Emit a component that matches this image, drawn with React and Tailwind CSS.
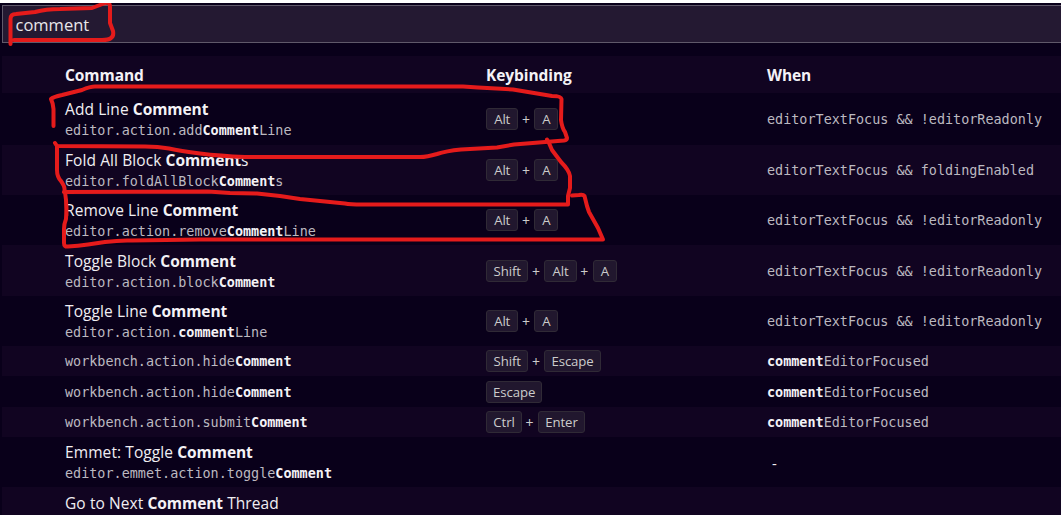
const B = ({ children }) => <b className="font-bold tracking-[-0.07px] text-[#f4f2f6]">{children}</b>;

const MonoB = ({ children }) => <b className="font-bold text-[#f4f2f6]">{children}</b>;

const editable = 'editorTextFocus && !editorReadonly';

const rows = [
  { h: 'h-[52px] pt-px', title: ['Add Line ', 'Comment', ''], id: ['editor.action.add', 'Comment', 'Line'], keys: ['Alt', 'A'], when: ['', '', editable] },
  { h: 'h-[50px]', title: ['Fold All Block ', 'Comment', 's'], id: ['editor.foldAllBlock', 'Comment', 's'], keys: ['Alt', 'A'], when: ['', '', 'editorTextFocus && foldingEnabled'] },
  { h: 'h-[50px]', title: ['Remove Line ', 'Comment', ''], id: ['editor.action.remove', 'Comment', 'Line'], keys: ['Alt', 'A'], when: ['', '', editable] },
  { h: 'h-[51px] pt-px', title: ['Toggle Block ', 'Comment', ''], id: ['editor.action.block', 'Comment', ''], keys: ['Shift', 'Alt', 'A'], when: ['', '', editable] },
  { h: 'h-[50px]', title: ['Toggle Line ', 'Comment', ''], id: ['editor.action.', 'comment', 'Line'], keys: ['Alt', 'A'], when: ['', '', editable] },
  { h: 'h-[30px]', id: ['workbench.action.hide', 'Comment', ''], keys: ['Shift', 'Escape'], when: ['', 'comment', 'EditorFocused'] },
  { h: 'h-[31px] pt-px', id: ['workbench.action.hide', 'Comment', ''], keys: ['Escape'], when: ['', 'comment', 'EditorFocused'] },
  { h: 'h-[30px]', id: ['workbench.action.submit', 'Comment', ''], keys: ['Ctrl', 'Enter'], when: ['', 'comment', 'EditorFocused'] },
  { h: 'h-[50px]', title: ['Emmet: Toggle ', 'Comment', ''], id: ['editor.emmet.action.toggle', 'Comment', ''], keys: [], when: null },
  { h: 'h-[28px] pt-px', title: ['Go to Next ', 'Comment', ' Thread'], keys: [] },
];

const keyWidths = { Alt: 'w-[32.4px]', A: 'w-6', Shift: 'w-[42.4px]', Escape: 'w-[56.3px]', Ctrl: 'w-9', Enter: 'w-[47px]' };

function Marked({ parts, mono }) {
  const Strong = mono ? MonoB : B;
  return (
    <>
      {parts[0]}
      {parts[1] && <Strong>{parts[1]}</Strong>}
      {parts[2]}
    </>
  );
}

function Keys({ keys }) {
  return (
    <div className="flex items-center text-[13.2px] text-[#cccccc]">
      {keys.map((key, i) => (
        <div key={key} className="flex items-center">
          {i > 0 && <span className="w-4 pt-[2px] pr-px text-center text-[14px] leading-5">+</span>}
          <kbd className={`${keyWidths[key]} flex h-[22px] items-center justify-center rounded-[3px] border border-[#302a36] bg-[#21172e] pt-0.5 font-['Open_Sans',sans-serif] tracking-[-0.1px]`}>
            {key}
          </kbd>
        </div>
      ))}
    </div>
  );
}

const mono = "font-['DejaVu_Sans_Mono',monospace] text-[13.44px] leading-5 text-[#bcb9c0]";

function Row({ row, striped }) {
  const { h, title, id, keys, when } = row;
  return (
    <div className={`${h} ${striped ? 'bg-[#110421]' : ''} grid shrink-0 grid-cols-[421px_281px_1fr] pl-[63px] whitespace-pre`}>
      <div className={title ? 'pt-[5px]' : 'pt-[6px]'}>
        {title && (
          <div className="h-[22px] text-[15.5px] leading-[21px] tracking-[0.09px] text-[#f0eef2]">
            <Marked parts={title} />
          </div>
        )}
        {id && <div className={mono}><Marked parts={id} mono /></div>}
      </div>
      <div className={title ? 'pt-[14px]' : 'pt-1'}><Keys keys={keys} /></div>
      <div className={`${mono} ${title ? 'pt-[16px]' : 'pt-[6px]'}`}>
        {when && <Marked parts={when} mono />}
        {when === null && <span className="pl-[5px] font-['Open_Sans',sans-serif] text-[15px] leading-5 text-[#f0eef2]">-</span>}
      </div>
    </div>
  );
}

const strokes = [
  'M10.5 44V19Q10.5 14 16 14L35 12Q46 9 60 9L92 8L104 3.5Q110 1 110 7L110 23L113 31Q114 36 111 38Q109 40 102 40H14',
  'M53.5 126V109Q53 103 51 99Q53 97 62 95L82 90Q90 86.5 95 86.5H463L478 87.5L513 89.5L552 96Q561 96 561.5 99L561 120Q562 128 565 132L567 138Q567 140 564 140.5L514 144.5L497 147.5L461 149.5Q446 151 437 154Q427 157 420 157H245Q220 156 200 153.5Q180 151 169 148.5Q158 146.5 145 146.5L57 146L55 143',
  'M57 146V170Q57 177 61 181Q66 188 64 192L208 191.5L230 193L257 193.5L280 196L300 199L345 203.5Q350 204.5 362 204.5H568V196L570 188V176Q569 170 561 162L552 150L549 143L547 139.5',
  'M65 192Q67 203 66 219Q64 224 64 229V243Q64 247 68 246.5Q78 246 88 244.5L105 242Q120 240 132 240.5L200 239.5H603L598 228L589 212L587 206L584.5 196Q583 194 579 195L572 195.5',
];

export default function App() {
  return (
    <div className="relative flex h-[515px] w-[1061px] flex-col overflow-hidden border-t-[3px] border-white bg-[#09001a] pl-0.5 font-['Open_Sans',sans-serif]">
      <div className="mt-0.5 flex h-[38px] shrink-0 items-center border border-r-0 border-[#60596a] bg-[#241932] pt-0.5 pl-[12.5px] text-[16.5px] text-[#e8e6ea]">
        <span>comment</span>
      </div>
      <div className="mt-[13px] grid h-[37px] shrink-0 grid-cols-[421px_281px_1fr] items-center bg-[#110421] pt-[3px] pl-[63px] text-[15.5px] font-bold tracking-[-0.07px] text-[#f4f2f6]">
        <span>Command</span>
        <span>Keybinding</span>
        <span>When</span>
      </div>
      {rows.map((row, i) => (
        <Row key={i} row={row} striped={i % 2 === 1} />
      ))}
      <svg className="pointer-events-none absolute -top-[3px] left-0" width="1061" height="515" viewBox="0 0 1061 515" fill="none" stroke="#e51b1b" strokeWidth="4" strokeLinecap="round" strokeLinejoin="round">
        {strokes.map((d) => <path key={d} d={d} />)}
      </svg>
    </div>
  );
}
